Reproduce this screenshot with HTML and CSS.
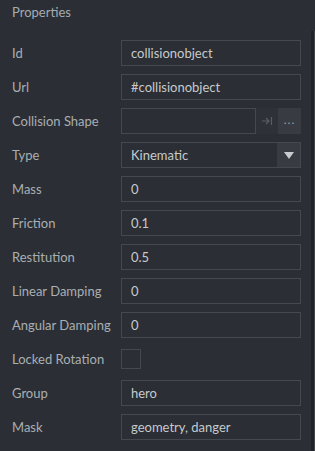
FILE: index.html
```html
<!DOCTYPE html>
<html lang="en">
<head>
  <meta charset="UTF-8" />
  <meta name="viewport" content="width=device-width, initial-scale=1.0"/>
  <title>Properties</title>
  <link rel="stylesheet" href="styles.css">
</head>
<body>

  <div class="panel">
    <div class="title">Properties</div>

    <div class="scroll">
      <div class="form">
        <div class="row">
          <span class="label">Id</span>
          <div class="field">collisionobject</div>
        </div>
        <div class="row">
          <span class="label">Url</span>
          <div class="field">#collisionobject</div>
        </div>
        <div class="row">
          <span class="label">Collision Shape</span>
          <div class="resource">
            <div class="field"></div>
            <div class="goto">
              <svg width="12" height="10" viewBox="0 0 12 10">
                <path d="M1 5h7M5 2l3 3-3 3M10.5 1v8" fill="none" stroke="#5b5f65" stroke-width="1.2"/>
              </svg>
            </div>
            <div class="browse">...</div>
          </div>
        </div>
        <div class="row">
          <span class="label">Type</span>
          <div class="select">
            <span class="value">Kinematic</span>
            <span class="arrow">
              <svg width="10" height="7" viewBox="0 0 10 7"><path d="M0 0h10L5 7z" fill="#c9cccf"/></svg>
            </span>
          </div>
        </div>
        <div class="row">
          <span class="label">Mass</span>
          <div class="field">0</div>
        </div>
        <div class="row">
          <span class="label">Friction</span>
          <div class="field">0.1</div>
        </div>
        <div class="row">
          <span class="label">Restitution</span>
          <div class="field">0.5</div>
        </div>
        <div class="row">
          <span class="label">Linear Damping</span>
          <div class="field">0</div>
        </div>
        <div class="row">
          <span class="label">Angular Damping</span>
          <div class="field">0</div>
        </div>
        <div class="row">
          <span class="label">Locked Rotation</span>
          <div><div class="check"></div></div>
        </div>
        <div class="row">
          <span class="label">Group</span>
          <div class="field">hero</div>
        </div>
        <div class="row">
          <span class="label">Mask</span>
          <div class="field">geometry, danger</div>
        </div>
      </div>
      <div class="scrollbar"></div>
    </div>
  </div>

</body>
</html>
```

FILE: styles.css
```css
html, body {
  margin: 0;
  height: 100%;
  background: #2b2e34;
}
body {
  font-family: Lato, "Noto Sans", sans-serif;
  font-size: 13px;
  color: #a9aeb3;
  overflow: hidden;
}
.panel {
  display: flex;
  flex-direction: column;
  height: 100%;
}
.title {
  height: 31px;
  line-height: 24px;
  padding-left: 12px;
  color: #a3abb3;
}
.scroll {
  flex: 1;
  display: flex;
}
.form {
  flex: 1;
  padding: 9px 10px 0 12px;
  display: flex;
  flex-direction: column;
  gap: 8px;
}
.row {
  display: grid;
  grid-template-columns: 109px 1fr;
  align-items: center;
  height: 26px;
}
.field {
  box-sizing: border-box;
  height: 26px;
  border: 1px solid #45494f;
  padding: 0 9px;
  line-height: 24px;
  color: #c6cacd;
  white-space: nowrap;
}
.resource {
  display: flex;
  height: 26px;
}
.resource .field {
  flex: 1;
}
.goto {
  width: 22px;
  display: flex;
  align-items: center;
  justify-content: center;
  background: #2e3137;
}
.browse {
  width: 23px;
  background: #383b41;
  color: #9ca1a6;
  text-align: center;
  line-height: 24px;
  font-size: 12px;
  letter-spacing: 1px;
}
.select {
  box-sizing: border-box;
  height: 26px;
  border: 1px solid #45494f;
  display: flex;
  color: #c6cacd;
}
.select .value {
  flex: 1;
  padding-left: 9px;
  line-height: 24px;
}
.select .arrow {
  width: 23px;
  background: #383b41;
  display: flex;
  align-items: center;
  justify-content: center;
}
.check {
  box-sizing: border-box;
  width: 20px;
  height: 20px;
  border: 1px solid #45494f;
}
.scrollbar {
  width: 3px;
  background: #202327;
  border-right: 1px solid #43464b;
}
```
